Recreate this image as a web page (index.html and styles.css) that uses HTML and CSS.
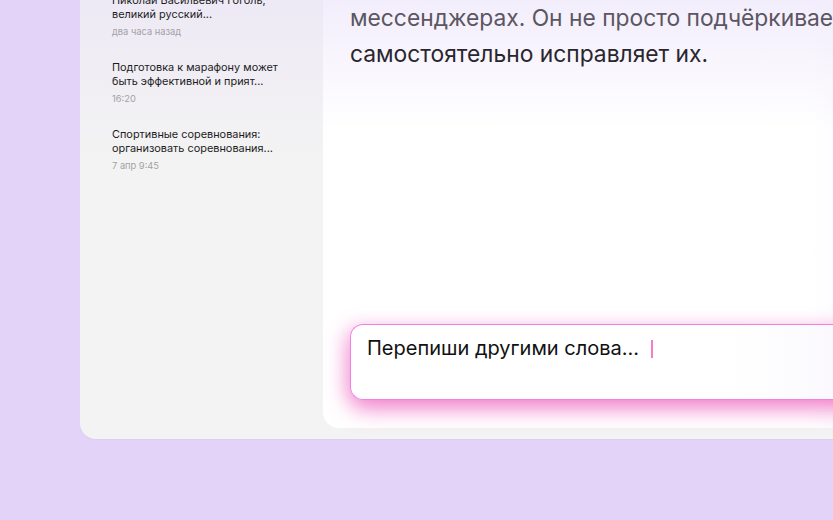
FILE: index.html
```html
<!DOCTYPE html>
<html lang="ru">
<head>
<meta charset="utf-8">
<link rel="stylesheet" href="styles.css">
</head>
<body>
<div class="card">
  <aside class="sidebar">
    <div class="item">
      <div class="title">Николай Васильевич Гоголь,<br>великий русский...</div>
      <div class="meta">два часа назад</div>
    </div>
    <div class="item">
      <div class="title">Подготовка к марафону может<br>быть эффективной и прият...</div>
      <div class="meta">16:20</div>
    </div>
    <div class="item">
      <div class="title">Спортивные соревнования:<br>организовать соревнования...</div>
      <div class="meta">7 апр 9:45</div>
    </div>
  </aside>
  <main class="main">
    <div class="answer">
      <p class="line faded">мессенджерах. Он не просто подчёркивает</p>
      <p class="line">самостоятельно исправляет их.</p>
    </div>
    <div class="input">
      <span class="prompt">Перепиши другими слова...</span><span class="caret"></span>
    </div>
  </main>
</div>
</body>
</html>
```
FILE: styles.css
```css
html, body {
  margin: 0;
  padding: 0;
  height: 100%;
  overflow: hidden;
}
body {
  background: #e3d3f8;
  font-family: "Inter", "Noto Sans", sans-serif;
}
.card {
  margin-top: -60px;
  margin-left: 80px;
  width: 900px;
  height: 499px;
  background: linear-gradient(180deg, #ece6f6 0px, #f3f3f3 220px);
  border-radius: 0 0 0 16px;
  box-shadow: 0 1px 0 #dcd0ea;
  display: flex;
  overflow: hidden;
}
.sidebar {
  width: 243px;
  flex: none;
  padding: 53px 0 0 32px;
  box-sizing: border-box;
  display: flex;
  flex-direction: column;
  gap: 22px;
}
.title {
  font-size: 10.9px;
  line-height: 14px;
  color: #1d1d1f;
  white-space: nowrap;
}
.meta {
  margin-top: 4px;
  font-size: 9.3px;
  line-height: 13px;
  color: #a3a1a6;
}
.main {
  flex: 1;
  height: 488px;
  border-radius: 0 0 0 16px;
  background:
    linear-gradient(180deg, rgba(236,228,250,0.95) 0px, rgba(255,255,255,0) 190px),
    linear-gradient(270deg, rgba(238,230,251,0.9) 0px, rgba(255,255,255,0) 170px),
    #ffffff;
  padding: 0 0 0 27px;
  box-sizing: border-box;
  display: flex;
  flex-direction: column;
}
.answer {
  padding-top: 60px;
  height: 384px;
  box-sizing: border-box;
}
.line {
  margin: 0;
  font-size: 22.8px;
  line-height: 36px;
  color: #29262d;
  white-space: nowrap;
}
.line.faded {
  color: #5b5661;
}
.input {
  height: 76px;
  border: 1px solid #f080e6;
  border-right: none;
  border-radius: 13px 0 0 13px;
  background: linear-gradient(90deg, #ffffff 0%, #ffffff 60%, #f4f0fb 100%);
  box-shadow: 0 10px 22px -2px rgba(240, 110, 195, 0.85), -6px 2px 18px rgba(245, 150, 215, 0.4);
  box-sizing: border-box;
  padding: 10px 0 0 16px;
  display: flex;
  align-items: flex-start;
}
.prompt {
  font-size: 20px;
  line-height: 26px;
  color: #111;
}
.caret {
  width: 2px;
  height: 18px;
  background: #f57ccd;
  margin: 5px 0 0 12px;
}
```
